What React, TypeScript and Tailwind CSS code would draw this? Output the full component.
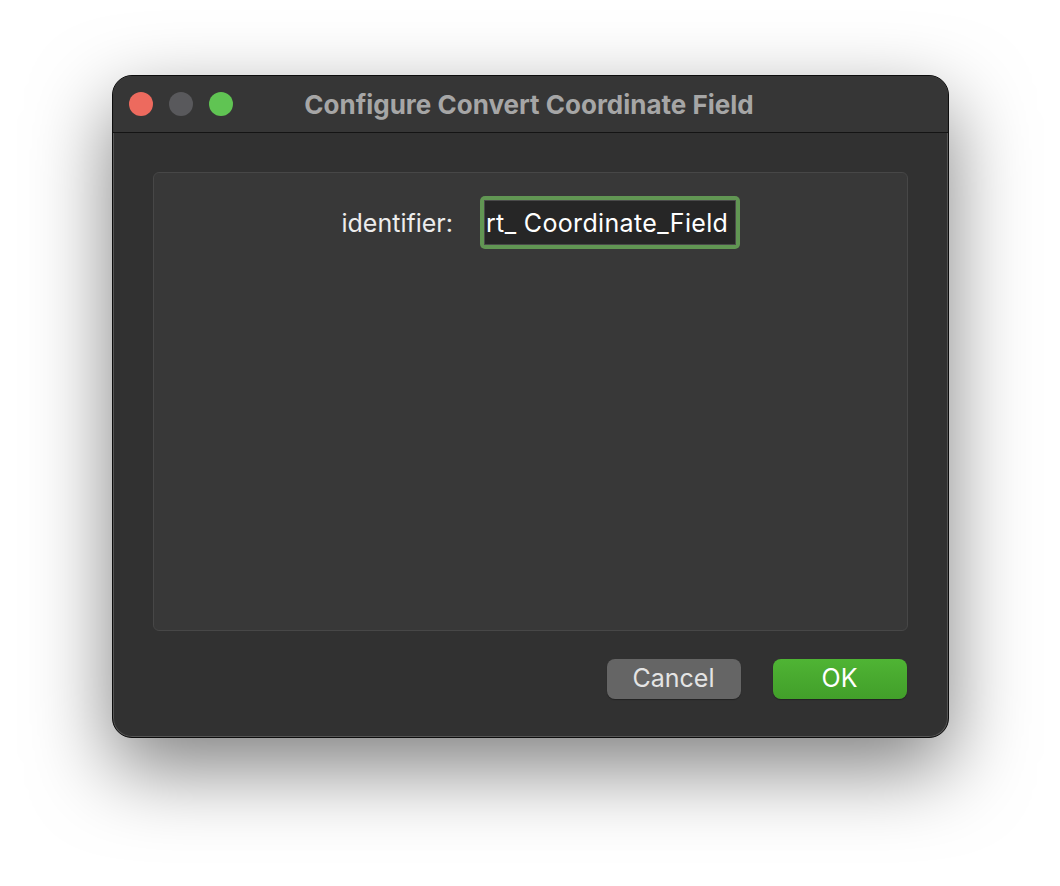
export default function App() {
  return (
    <div
      className="min-h-[886px] w-full bg-white pt-[75px]"
      style={{ fontFamily: "Inter, 'Noto Sans', sans-serif" }}
    >
      <div className="mx-auto flex h-[663px] w-[837px] flex-col overflow-hidden rounded-[20px] border border-[#0d0d0d] bg-[#313131] shadow-[inset_0_0_0_1px_#555,0_30px_80px_rgba(0,0,0,0.5)]">
        {/* title bar */}
        <div className="relative flex h-[57px] shrink-0 items-center border-b border-[#141414] bg-[#363636]">
          <div className="absolute left-[16px] top-[16px] flex gap-[16px]">
            <span className="h-[24px] w-[24px] rounded-full bg-[#ed6a5e]" />
            <span className="h-[24px] w-[24px] rounded-full bg-[#59595c]" />
            <span className="h-[24px] w-[24px] rounded-full bg-[#60c453]" />
          </div>
          <h1 className="w-full pr-[2px] text-center text-[26px] font-bold text-[#a6a6a6]">
            Configure Convert Coordinate Field
          </h1>
        </div>

        {/* body */}
        <div className="flex flex-1 flex-col px-[40px] pt-[39px]">
          <div className="h-[459px] rounded-[6px] border border-[#474747] bg-[#383838]">
            <div className="flex items-center pl-[188px] pt-[23px]">
              <span className="pt-[3px] text-[25px] text-[#ececec]">identifier:</span>
              <div className="ml-[27px] rounded-[5px] bg-[#619653] p-[4px]">
                <div className="flex h-[45px] w-[252px] items-center overflow-hidden border border-[#4a4a4a] bg-[#262626] pl-[1px] pt-[3px]">
                  <span className="whitespace-nowrap text-[25px] tracking-[0.35px] text-white">rt_ Coordinate_Field</span>
                </div>
              </div>
            </div>
          </div>

          <div className="mt-[28px] flex justify-end gap-[32px] pr-[1px]">
            <button className="h-[40px] w-[134px] rounded-[8px] bg-[#656565] text-[25px] text-[#e4e4e4] shadow-[0_1px_1px_rgba(0,0,0,0.3)]">
              Cancel
            </button>
            <button className="h-[40px] w-[134px] rounded-[8px] bg-gradient-to-b from-[#4fb434] to-[#429f2a] text-[25px] text-white shadow-[0_1px_1px_rgba(0,0,0,0.3)]">
              OK
            </button>
          </div>
        </div>
      </div>
    </div>
  );
}
